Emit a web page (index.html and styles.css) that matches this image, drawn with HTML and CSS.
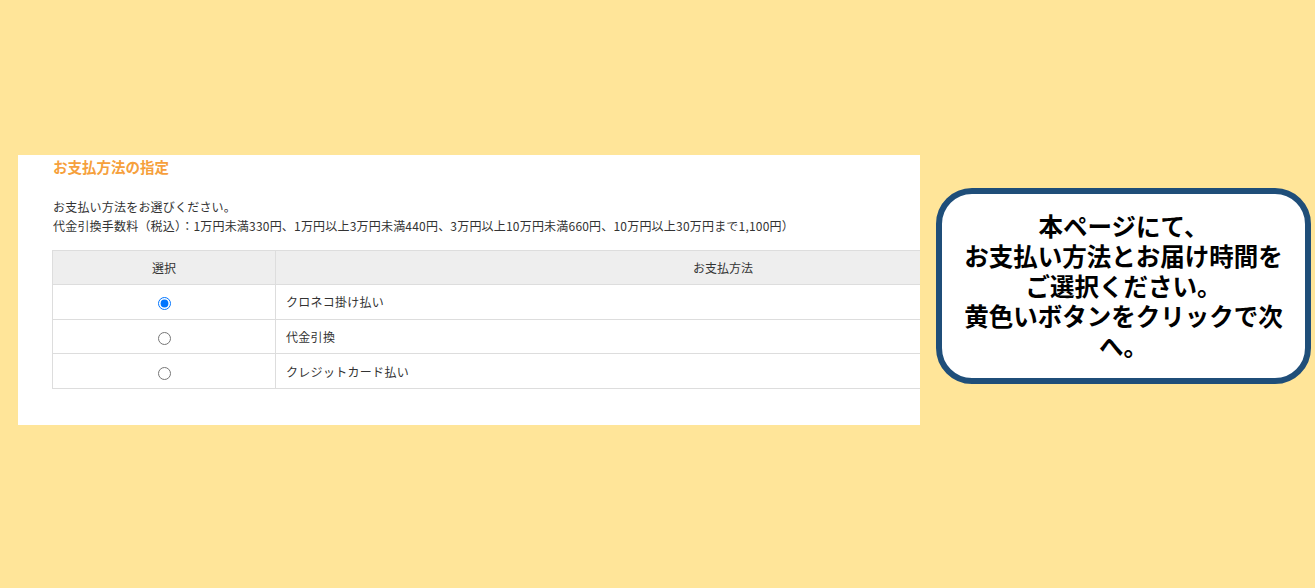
FILE: index.html
```html
<!DOCTYPE html>
<html lang="ja">
<head>
<meta charset="utf-8">
<title>お支払方法の指定</title>
<link rel="stylesheet" href="styles.css">
</head>
<body>
<div class="stage">
  <section class="panel">
    <div class="panel-inner">
      <h2 class="title">お支払方法の指定</h2>
      <p class="lead">お支払い方法をお選びください。<br>代金引換手数料（税込）：1万円未満330円、1万円以上3万円未満440円、3万円以上10万円未満660円、10万円以上30万円まで1,100円）</p>
      <table class="pay-table">
        <thead>
          <tr><th class="col-sel">選択</th><th class="col-name">お支払方法</th></tr>
        </thead>
        <tbody>
          <tr><td class="col-sel"><input type="radio" name="pay" checked></td><td class="col-name">クロネコ掛け払い</td></tr>
          <tr><td class="col-sel"><input type="radio" name="pay"></td><td class="col-name">代金引換</td></tr>
          <tr><td class="col-sel"><input type="radio" name="pay"></td><td class="col-name">クレジットカード払い</td></tr>
        </tbody>
      </table>
    </div>
  </section>
  <aside class="callout">
    <p class="callout-text">本ページにて、<br>お支払い方法とお届け時間を<br>ご選択ください。<br>黄色いボタンをクリックで次へ。</p>
  </aside>
</div>
</body>
</html>
```
FILE: styles.css
```css
html, body {
  margin: 0;
  padding: 0;
}
body {
  background: #ffe599;
  font-family: "Noto Sans CJK JP", "Noto Sans", sans-serif;
  width: 1315px;
  height: 588px;
  overflow: hidden;
}
.stage {
  display: flex;
  align-items: flex-start;
  padding: 155px 0 0 18px;
}
.panel {
  width: 902px;
  height: 270px;
  background: #fff;
  overflow: hidden;
  flex: none;
}
.panel-inner {
  width: 1119px;
  padding: 2px 0 0 34px;
}
.title {
  margin: 0;
  font-size: 14.5px;
  line-height: 20px;
  font-weight: bold;
  color: #f6a03c;
  padding-left: 1px;
}
.lead {
  margin: 20px 0 15px 1px;
  font-size: 12px;
  line-height: 19px;
  color: #333;
  letter-spacing: 0.2px;
  white-space: nowrap;
}
.pay-table {
  width: 1119px;
  border-collapse: collapse;
  font-size: 12px;
  color: #333;
}
.pay-table th,
.pay-table td {
  border: 1px solid #dddddd;
  padding: 0 10px;
  box-sizing: border-box;
}
.pay-table th {
  height: 34px;
  background: #eeeeee;
  font-weight: normal;
  text-align: center;
}
.pay-table td {
  height: 34.7px;
  letter-spacing: 0.3px;
}
.pay-table .col-sel {
  width: 223px;
  text-align: center;
}
.pay-table td.col-name {
  text-align: left;
}
.pay-table input[type="radio"] {
  margin: 0;
  width: 13px;
  height: 13px;
  vertical-align: middle;
}
.callout {
  flex: none;
  box-sizing: border-box;
  width: 375px;
  height: 196px;
  margin: 33px 0 0 16px;
  border: 6px solid #1f4e79;
  border-radius: 36px;
  background: #fff;
  display: flex;
  align-items: center;
  justify-content: center;
  padding: 0 18px;
}
.callout-text {
  margin: 0;
  font-size: 24.5px;
  line-height: 30px;
  font-weight: bold;
  color: #000;
  text-align: center;
}
```
